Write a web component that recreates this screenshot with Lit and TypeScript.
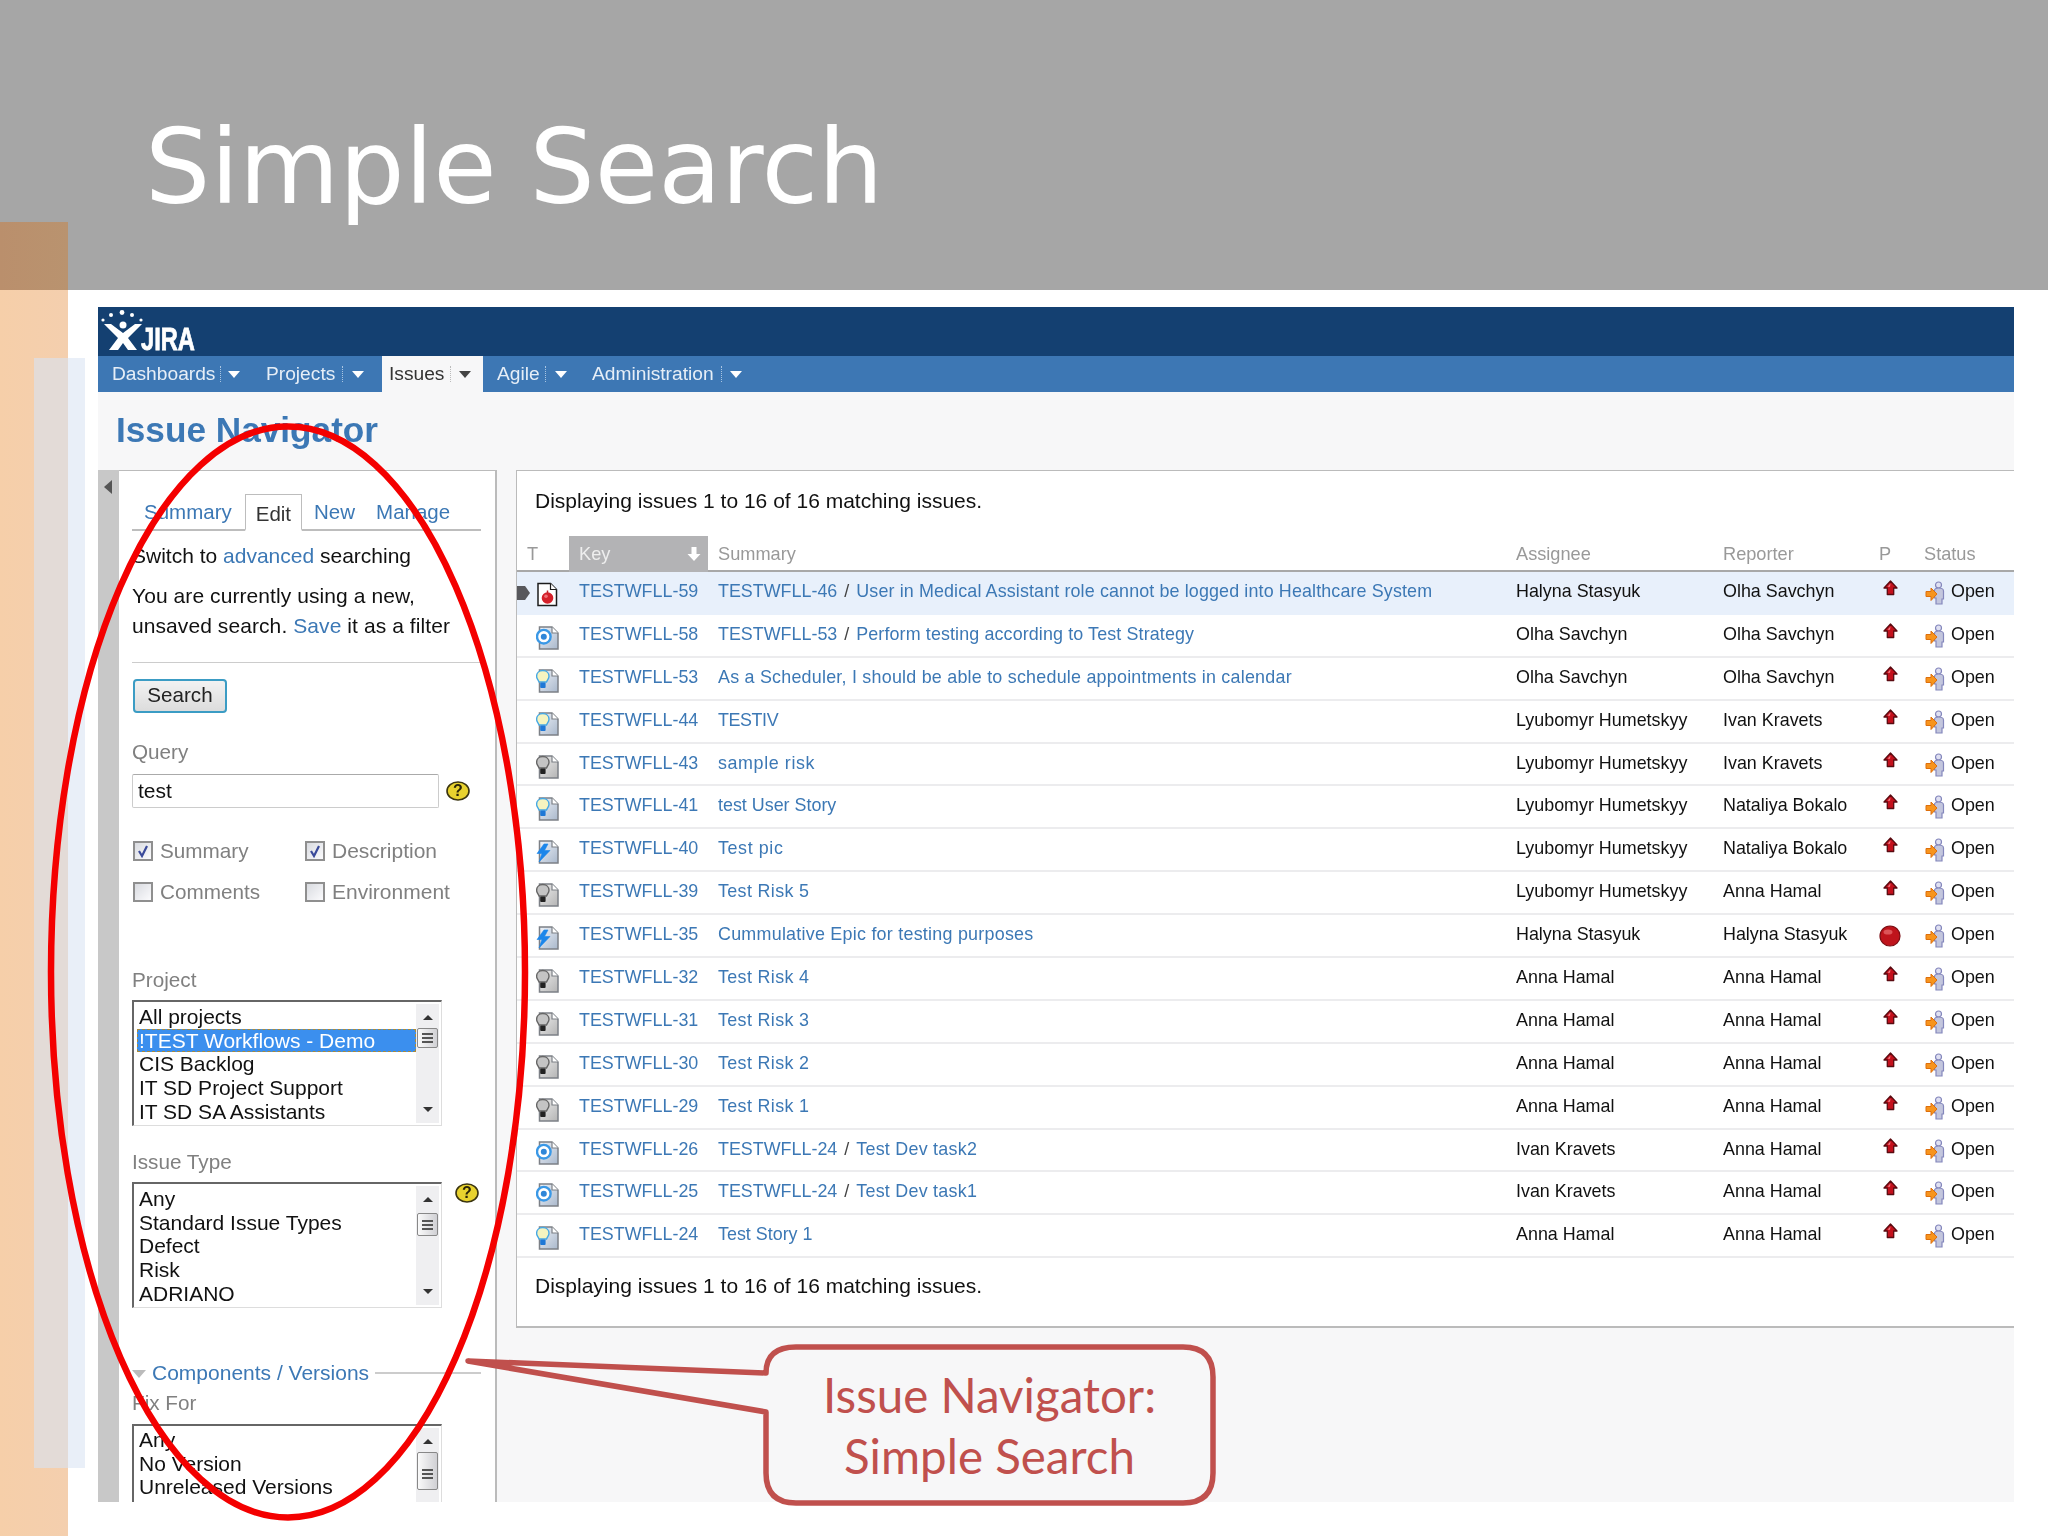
import { LitElement, html, css, svg } from "lit";
import { customElement } from "lit/decorators.js";

type Row = { t: string; key: string; parent?: string; sum: string; a: string; r: string; p?: string; ls: number };
const rows: Row[] = [
  { t: "bug", key: "TESTWFLL-59", parent: "TESTWFLL-46", sum: "User in Medical Assistant role cannot be logged into Healthcare System", a: "Halyna Stasyuk", r: "Olha Savchyn", ls: 0.13 },
  { t: "task", key: "TESTWFLL-58", parent: "TESTWFLL-53", sum: "Perform testing according to Test Strategy", a: "Olha Savchyn", r: "Olha Savchyn", ls: 0.12 },
  { t: "story", key: "TESTWFLL-53", sum: "As a Scheduler, I should be able to schedule appointments in calendar", a: "Olha Savchyn", r: "Olha Savchyn", ls: 0.23 },
  { t: "story", key: "TESTWFLL-44", sum: "TESTIV", a: "Lyubomyr Humetskyy", r: "Ivan Kravets", ls: -0.4 },
  { t: "risk", key: "TESTWFLL-43", sum: "sample risk", a: "Lyubomyr Humetskyy", r: "Ivan Kravets", ls: 0.6 },
  { t: "story", key: "TESTWFLL-41", sum: "test User Story", a: "Lyubomyr Humetskyy", r: "Nataliya Bokalo", ls: 0 },
  { t: "epic", key: "TESTWFLL-40", sum: "Test pic", a: "Lyubomyr Humetskyy", r: "Nataliya Bokalo", ls: 0.6 },
  { t: "risk", key: "TESTWFLL-39", sum: "Test Risk 5", a: "Lyubomyr Humetskyy", r: "Anna Hamal", ls: 0.35 },
  { t: "epic", key: "TESTWFLL-35", sum: "Cummulative Epic for testing purposes", a: "Halyna Stasyuk", r: "Halyna Stasyuk", p: "blocker", ls: 0.25 },
  { t: "risk", key: "TESTWFLL-32", sum: "Test Risk 4", a: "Anna Hamal", r: "Anna Hamal", ls: 0.35 },
  { t: "risk", key: "TESTWFLL-31", sum: "Test Risk 3", a: "Anna Hamal", r: "Anna Hamal", ls: 0.35 },
  { t: "risk", key: "TESTWFLL-30", sum: "Test Risk 2", a: "Anna Hamal", r: "Anna Hamal", ls: 0.35 },
  { t: "risk", key: "TESTWFLL-29", sum: "Test Risk 1", a: "Anna Hamal", r: "Anna Hamal", ls: 0.35 },
  { t: "task", key: "TESTWFLL-26", parent: "TESTWFLL-24", sum: "Test Dev task2", a: "Ivan Kravets", r: "Anna Hamal", ls: 0.25 },
  { t: "task", key: "TESTWFLL-25", parent: "TESTWFLL-24", sum: "Test Dev task1", a: "Ivan Kravets", r: "Anna Hamal", ls: 0.25 },
  { t: "story", key: "TESTWFLL-24", sum: "Test Story 1", a: "Anna Hamal", r: "Anna Hamal", ls: 0 },
];

function typeIcon(t: string) {
  const bug = t === "bug";
  const risk = t === "risk";
  const fill = bug ? "#ffffff" : risk ? "url(#docGrey)" : "url(#docBlue)";
  const stroke = bug ? "#1c1c1c" : "#7c8086";
  let overlay = svg``;
  if (bug) overlay = svg`<circle cx="11.500" cy="18" r="5.800" fill="#d4202a"/><circle cx="10" cy="16.200" r="1.800" fill="#ee7076"/><path d="M11.500 10.500v2.500" stroke="#c02028" stroke-width="1.500"/>`;
  if (t === "task") overlay = svg`<circle cx="7.800" cy="13.700" r="6.800" fill="#ffffff" stroke="#3a98e6" stroke-width="2.400"/><circle cx="7.800" cy="13.700" r="3" fill="#2f86d8"/>`;
  if (t === "story" || risk) {
    const glass = risk ? "#c4c4c4" : "#f5f4c0";
    const edge = risk ? "#666666" : "#46a8e4";
    const base = risk ? "#222222" : "#1f78d6";
    overlay = svg`<path d="M6.800 4.500c3.700 0 6.200 2.500 6.200 5.700 0 2.500-1.700 3.600-2.500 5.800h-7.400c-.8-2.200-2.500-3.300-2.500-5.800 0-3.200 2.500-5.700 6.200-5.700z" fill="${glass}" stroke="${edge}" stroke-width="1.400"/><rect x="4.200" y="16.500" width="5.400" height="5.500" rx="1" fill="${base}"/>`;
  }
  if (t === "epic") overlay = svg`<path d="M8 7L1 16.500h5L3 25 14 13.500H8.500L12 7z" fill="#1c86ea" stroke="#1c86ea" stroke-width=".6"/>`;
  return html`<svg class="ticon" width="24" height="27" viewBox="0 0 24 27">
    <g transform="${bug ? "translate(-1.500 -.5)" : ""}">
      <path d="M3.500 4H16l6 6v16H3.500z" fill="${fill}" stroke="${stroke}" stroke-width="1.500"/>
      <path d="M16 4v6h6" fill="#ffffff" stroke="${stroke}" stroke-width="1.200"/>
    </g>
    ${overlay}
  </svg>`;
}

const upArrow = html`<svg width="17" height="18" viewBox="0 0 17 18"><path d="M8.500 1l6.500 7h-3.300v6.500h-6.400v-6.500h-3.300z" fill="#c4101c" stroke="#5a0a10" stroke-width="1.300" stroke-linejoin="round"/><path d="M8.500 3.500l-3 3.200h2.500z" fill="#f0808a"/></svg>`;
const blocker = html`<svg width="22" height="22" viewBox="0 0 22 22"><circle cx="11" cy="11" r="10" fill="#bf141c" stroke="#7a0c12" stroke-width="1.200"/><ellipse cx="9" cy="7" rx="4.500" ry="2.600" fill="#dc5458"/></svg>`;
const openIcon = html`<svg width="22" height="24" viewBox="0 0 22 24"><circle cx="13.500" cy="4" r="3" fill="#dfe0f2" stroke="#8487bc" stroke-width="1.200"/><path d="M9.500 9.500c0-1.500 1.500-2.500 4-2.500s5 1 5 3v8h-1.500v5h-6v-6h-1.500z" fill="#c3c6dd" stroke="#8487bc" stroke-width="1.200"/><path d="M1 10.500h5v-3.500l6 6-6 6.500v-4h-5z" fill="#f7941d" stroke="#dd6f0c" stroke-width="1"/></svg>`;
const help = html`<svg class="help" width="24" height="20" viewBox="0 0 24 20"><ellipse cx="12" cy="10" rx="11" ry="9" fill="#e8d22e" stroke="#3a3410" stroke-width="1.600"/><text x="12" y="15" text-anchor="middle" class="helpq">?</text></svg>`;
const tick = html`<svg width="14" height="14" viewBox="0 0 14 14"><path d="M3 7l3 5 5-10" fill="none" stroke="#3a4a9a" stroke-width="2.200"/></svg>`;

function listbox(items: string[], sel: number, cls: string) {
  return html`<div class="listbox ${cls}">
    <div class="items">${items.map((s, i) => html`<div class="opt ${i === sel ? "sel" : ""}">${s}</div>`)}</div>
    <div class="sb">
      <span class="arrow up"></span>
      <span class="thumb"><i></i><i></i><i></i></span>
      <span class="arrow down"></span>
    </div>
  </div>`;
}

const man = html`<svg class="man" width="44" height="42" viewBox="0 0 44 42" fill="#fff">
  <circle cx="2" cy="10" r="1.600"/><circle cx="10" cy="5" r="2"/><circle cx="21" cy="2.500" r="2.400"/><circle cx="31" cy="5" r="2"/><circle cx="40" cy="10" r="1.600"/>
  <circle cx="22" cy="15" r="3.500"/>
  <path d="M3 14h7l12 9 12-9h7L27 28l9 12h-9l-5-7-5 7H8l9-12z"/>
</svg>`;

@customElement("app-root")
export class AppRoot extends LitElement {
  static styles = css`
    :host { display: block; width: 2048px; height: 1536px; position: relative; overflow: hidden; background: #fff; font-family: "Liberation Sans", Arial, sans-serif; }
    * { box-sizing: border-box; }
    .titlebar { height: 290px; background: #a6a6a6; padding: 45px 0 0 145px; display: flex; align-items: center; }
    .titlebar h1 { margin: 0; font: 400 103px/1 "DejaVu Sans", Verdana, sans-serif; color: #fff; }
    .strip { position: absolute; left: 0; top: 222px; bottom: 0; width: 68px; background: linear-gradient(90deg, #f6cfa9, #f4cfae); }
    .strip-top { position: absolute; left: 0; top: 222px; height: 68px; width: 68px; background: linear-gradient(90deg, #ba8f6c, #b9936f); }
    .ghost { position: absolute; top: 358px; height: 1110px; }
    .ghost.a { left: 34px; width: 34px; background: #e3dbd7; }
    .ghost.b { left: 68px; width: 17px; background: #e9eff8; }

    .stage { padding: 17px 34px 0 98px; position: relative; }
    .jira { height: 1195px; background: #f7f7f8; overflow: hidden; filter: blur(.3px); }
    .brand { height: 49px; background: #144071; display: flex; align-items: flex-start; padding: 3px 0 0 3px; }
    .man { flex: none; }
    .jiraword { font: 700 32px/1 "Liberation Sans", sans-serif; color: #fff; -webkit-text-stroke: .8px #fff; transform: scaleX(.74); transform-origin: 0 0; margin: 13px 0 0 -4px; }
    nav { height: 36px; background: #3d77b4; display: flex; font-size: 19.200px; color: #e6eef7; }
    .ni { display: flex; align-items: center; height: 36px; }
    .ni.d { margin-left: 14px; width: 154px; }
    .ni.p { width: 116px; }
    .ni.i { width: 101px; background: #f7f7f8; color: #333; padding-left: 7px; }
    .ni.ag { margin-left: 14px; width: 95px; }
    .ni.ad { width: 160px; }
    .ni .sep { width: 0; height: 16px; border-left: 1px dotted #a9c5e2; margin: 0 7px 0 5px; }
    .ni.p .sep { margin: 0 9px 0 7px; }
    .ni.ag .sep { margin: 0 9px 0 5px; }
    .ni.ad .sep { margin: 0 8px 0 7px; }
    .ni .car { width: 0; height: 0; border-left: 6px solid transparent; border-right: 6px solid transparent; border-top: 7px solid #fff; }
    .ni.i .sep { border-left-color: #bbb; margin: 0 8px 0 6px; }
    .ni.i .car { border-top-color: #444; }
    .pagehead { height: 78px; padding: 16px 0 0 18px; }
    .pagehead h2 { margin: 0; font: 700 35.200px/44px "Liberation Sans", sans-serif; color: #3c78b5; }
    .main { display: flex; align-items: flex-start; height: 1032px; }
    .gutter { width: 21px; height: 100%; background: #c8c8c8; flex: none; padding: 10px 0 0 6px; }
    .gutter span { display: block; width: 0; height: 0; border-top: 7px solid transparent; border-bottom: 7px solid transparent; border-right: 8px solid #555; }
    .side { width: 378px; height: 100%; flex: none; background: #fff; border-top: 1px solid #bbb; border-right: 2px solid #bbb; padding: 23px 14px 0 13px; overflow: hidden; font-size: 21px; color: #111; }
    .tabs { height: 37px; border-bottom: 2px solid #bdbdbd; display: flex; align-items: flex-end; font-size: 20.500px; }
    .tab { height: 36px; line-height: 38px; color: #3c78b5; padding: 0 12px; }
    .tab.s { padding-right: 13px; }
    .tab.on { color: #333; padding: 0 10px; background: #fff; height: 37px; margin-bottom: -2px; border: 1px solid #bdbdbd; border-bottom: 2px solid #fff; }
    .tab.n { padding-right: 9px; }
    .tab.m { padding-left: 12px; }
    a { color: #3c78b5; text-decoration: none; }
    .sw { margin-top: 10px; line-height: 30px; white-space: nowrap; }
    .cur { margin-top: 10px; line-height: 30px; white-space: nowrap; letter-spacing: .08px; }
    .hr { margin-top: 21px; height: 1px; background: #ccc; }
    .btn { margin-top: 16px; width: 94px; height: 34px; border: 2px solid #3b9cc4; border-radius: 4px; background: linear-gradient(#f2f2f2, #dcdcdc); text-align: center; line-height: 28px; font-size: 20.600px; color: #222; margin-left: 1px; }
    .label { color: #808080; line-height: 26px; font-size: 20.700px; }
    .q { margin-top: 26px; }
    .inrow { margin-top: 9px; display: flex; align-items: center; gap: 7px; }
    .input { width: 307px; height: 34px; border: 1px solid #ccc; border-top-color: #aaa; border-radius: 2px; background: #fff; padding-left: 5px; line-height: 32px; color: #111; }
    .helpq { font: 700 16px "Liberation Sans", sans-serif; fill: #2a2408; }
    .checks { margin-top: 30px; display: grid; grid-template-columns: 172px 1fr; row-gap: 15px; padding-left: 1px; }
    .ck { display: flex; align-items: center; gap: 7px; color: #808080; line-height: 26px; font-size: 20.700px; }
    .ck.w { font-size: 21px; }
    .box { width: 20px; height: 20px; border: 2px solid #8f8f8f; background: linear-gradient(135deg, #d9dbe0, #fbfbfd); display: flex; align-items: center; justify-content: center; }
    .project { margin-top: 62px; }
    .listbox { display: flex; width: 310px; height: 126px; border: 1px solid #ddd; border-top: 2px solid #666; border-left: 2px solid #666; background: #fff; color: #111; flex: none; overflow: hidden; }
    .items { width: 282px; padding: 3px 0 0 3px; }
    .opt { height: 23.700px; line-height: 23.700px; padding-left: 2px; white-space: nowrap; }
    .opt.sel { background: #3b8fee; color: #fff; outline: 1px dashed #a88a3c; outline-offset: -1px; }
    .sb { width: 23px; margin: 2px 0; background: #efeff1; display: flex; flex-direction: column; align-items: center; position: relative; }
    .arrow { width: 0; height: 0; border-left: 5px solid transparent; border-right: 5px solid transparent; flex: none; }
    .arrow.up { border-bottom: 5px solid #333; margin-top: 11px; }
    .arrow.down { border-top: 5px solid #333; margin-top: auto; margin-bottom: 11px; }
    .thumb { width: 21px; height: 20px; margin-top: 8px; border: 1px solid #888; border-radius: 2px; background: linear-gradient(90deg, #fafafa, #d0d0d4); display: flex; flex-direction: column; justify-content: center; gap: 2px; align-items: center; }
    .thumb i { display: block; width: 11px; height: 2px; background: #555; }
    .listbox.p { margin-top: 7px; }
    .it-label { margin-top: 23px; }
    .itrow { margin-top: 7px; display: flex; align-items: flex-start; gap: 13px; }
    .itrow .help { margin-top: 1px; }
    .itrow .thumb { height: 23px; margin-top: 11px; }
    .sec { margin-top: 52px; display: flex; align-items: center; line-height: 26px; }
    .sec .tri { width: 0; height: 0; border-left: 7px solid transparent; border-right: 7px solid transparent; border-top: 8px solid #bbb; margin: 2px 6px 0 0; flex: none; }
    .sec a { flex: none; }
    .sec .ln { flex: 1; height: 2px; background: #ccc; margin-left: 6px; }
    .ff { margin-top: 4px; }
    .listbox.f { margin-top: 8px; height: 100px; }
    .listbox.f .items { padding-top: 2px; }
    .listbox.f .thumb { height: 38px; justify-content: flex-end; padding-bottom: 10px; }
    .listbox.f .arrow.down { display: none; }

    .results { margin-left: 19px; flex: 1; background: #fff; border-top: 1px solid #bbb; border-left: 1px solid #bbb; border-bottom: 2px solid #bbb; height: 858px; padding-top: 15px; }
    .disp { margin-left: 18px; font-size: 21px; line-height: 30px; color: #111; }
    .grid { display: grid; grid-template-columns: 52px 139px 798px 207px 156px 45px 1fr; }
    .thead { margin-top: 20px; height: 36px; border-bottom: 2px solid #a8a8a8; font-size: 18.200px; color: #999; }
    .thead > div { padding-left: 10px; line-height: 36px; }
    .thead .key { background: #b3b3b5; color: #eee; display: flex; justify-content: space-between; padding-right: 6px; align-items: center; }
    .row { height: 42.900px; border-bottom: 2px solid #ececee; font-size: 17.900px; color: #111; position: relative; }
    .row.hl { background: #e8f0fb; border-bottom-color: #e8f0fb; }
    .row > div { padding-left: 10px; line-height: 39px; white-space: nowrap; }
    .row .tc { padding-left: 19px; padding-top: 8px; line-height: 0; }
    .row .sl { color: #444; margin: 0 2px; }
    .row .pc { padding-left: 13px; padding-top: 8px; line-height: 0; }
    .row .pc.big { padding-left: 10px; padding-top: 10px; }
    .row .st { padding-left: 11px; padding-top: 0; display: flex; align-items: flex-start; gap: 4px; }
    .row .st svg { margin-top: 9px; flex: none; }
    .cursor { position: absolute; left: 0; top: 14px; width: 13px; height: 14px; background: #58585c; clip-path: polygon(0 0, 62% 0, 100% 50%, 62% 100%, 0 100%); padding: 0 !important; }
    .foot { margin-top: 13px; }

    .over { position: absolute; left: 0; top: 0; pointer-events: none; }
    .calltext { position: absolute; left: 766px; top: 1364px; width: 447px; text-align: center; font: 400 47.500px/61px Lato, "Open Sans", sans-serif; color: #c0504d; }
  `;

  render() {
    return html`
      <div class="strip"></div>
      <div class="ghost a"></div><div class="ghost b"></div>
      <header class="titlebar"><h1>Simple Search</h1></header>
      <div class="strip-top"></div>
      <svg width="0" height="0" class="over"><defs>
        <linearGradient id="docBlue" x1="0" y1="0" x2="1" y2="1"><stop offset="0" stop-color="#f0f3f8"/><stop offset="1" stop-color="#a9b8cc"/></linearGradient>
        <linearGradient id="docGrey" x1="0" y1="0" x2="1" y2="1"><stop offset="0" stop-color="#f0f0f0"/><stop offset="1" stop-color="#b4b4b4"/></linearGradient>
      </defs></svg>
      <div class="stage">
        <div class="jira">
          <div class="brand">${man}<span class="jiraword">JIRA</span></div>
          <nav>
            <div class="ni d">Dashboards<span class="sep"></span><span class="car"></span></div>
            <div class="ni p">Projects<span class="sep"></span><span class="car"></span></div>
            <div class="ni i">Issues<span class="sep"></span><span class="car"></span></div>
            <div class="ni ag">Agile<span class="sep"></span><span class="car"></span></div>
            <div class="ni ad">Administration<span class="sep"></span><span class="car"></span></div>
          </nav>
          <div class="pagehead"><h2>Issue Navigator</h2></div>
          <div class="main">
            <div class="gutter"><span></span></div>
            <aside class="side">
              <div class="tabs">
                <div class="tab s">Summary</div><div class="tab on">Edit</div><div class="tab n">New</div><div class="tab m">Manage</div>
              </div>
              <div class="sw">Switch to <a>advanced</a> searching</div>
              <div class="cur">You are currently using a new,<br />unsaved search. <a>Save</a> it as a filter</div>
              <div class="hr"></div>
              <div class="btn">Search</div>
              <div class="label q">Query</div>
              <div class="inrow"><div class="input">test</div>${help}</div>
              <div class="checks">
                <div class="ck"><span class="box">${tick}</span>Summary</div>
                <div class="ck w"><span class="box">${tick}</span>Description</div>
                <div class="ck"><span class="box"></span>Comments</div>
                <div class="ck w"><span class="box"></span>Environment</div>
              </div>
              <div class="label project">Project</div>
              ${listbox(["All projects", "!TEST Workflows - Demo", "CIS Backlog", "IT SD Project Support", "IT SD SA Assistants"], 1, "p")}
              <div class="label it-label">Issue Type</div>
              <div class="itrow">${listbox(["Any", "Standard Issue Types", "Defect", "Risk", "ADRIANO"], -1, "")}${help}</div>
              <div class="sec"><span class="tri"></span><a>Components / Versions</a><span class="ln"></span></div>
              <div class="label ff">Fix For</div>
              ${listbox(["Any", "No Version", "Unreleased Versions"], -1, "f")}
            </aside>
            <section class="results">
              <div class="disp">Displaying issues 1 to 16 of 16 matching issues.</div>
              <div class="grid thead">
                <div>T</div>
                <div class="key">Key<svg width="16" height="16" viewBox="0 0 16 16"><path d="M5.500 1h5v7h4l-6.500 7-6.500-7h4z" fill="#fff"/></svg></div>
                <div>Summary</div><div>Assignee</div><div>Reporter</div><div>P</div><div>Status</div>
              </div>
              ${rows.map((r, i) => html`
                <div class="grid row ${i === 0 ? "hl" : ""}">
                  ${i === 0 ? html`<div class="cursor"></div>` : ""}
                  <div class="tc">${typeIcon(r.t)}</div>
                  <div><a>${r.key}</a></div>
                  <div>${r.parent ? html`<a>${r.parent}</a> <span class="sl">/</span> ` : ""}<a style="letter-spacing:${r.ls}px">${r.sum}</a></div>
                  <div>${r.a}</div>
                  <div>${r.r}</div>
                  <div class="pc ${r.p ? "big" : ""}">${r.p ? blocker : upArrow}</div>
                  <div class="st">${openIcon}<span>Open</span></div>
                </div>`)}
              <div class="disp foot">Displaying issues 1 to 16 of 16 matching issues.</div>
            </section>
          </div>
        </div>
      </div>
      <svg class="over" width="2048" height="1536" viewBox="0 0 2048 1536">
        <path d="M766 1373L468 1361L766 1412V1473Q766 1503 796 1503H1183Q1213 1503 1213 1473V1377Q1213 1347 1183 1347H796Q766 1347 766 1373Z" fill="#f7f7f8" stroke="#c0504d" stroke-width="5.500" stroke-linejoin="round"/>
        <ellipse cx="288" cy="972" rx="237" ry="545.500" fill="none" stroke="#f40000" stroke-width="6.500"/>
      </svg>
      <div class="calltext">Issue Navigator:<br />Simple Search</div>
    `;
  }
}
